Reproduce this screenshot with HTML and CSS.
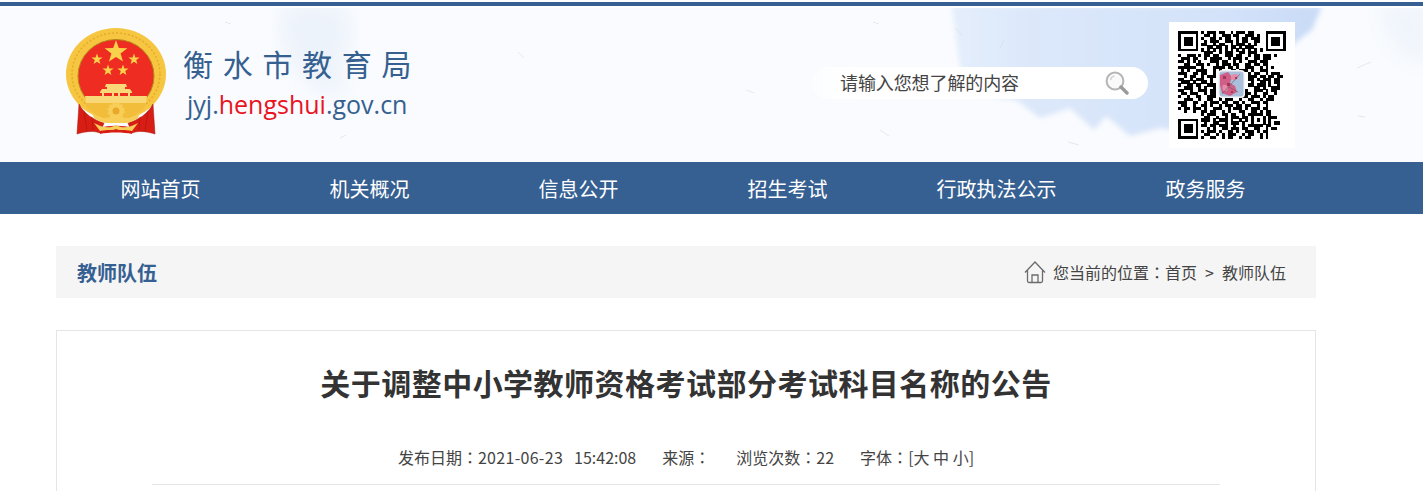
FILE: index.html
```html
<!DOCTYPE html>
<html lang="zh-CN">
<head>
  <meta charset="UTF-8" />
  <title>衡水市教育局</title>
  <link rel="stylesheet" href="styles.css">
</head>
<body>
  <div class="topLine"></div>

  <!-- Header -->
  <div class="header">
    <svg class="headerBg" viewBox="0 0 1423 154" preserveAspectRatio="none" aria-hidden="true">
      <defs>
        <filter id="soft"><feGaussianBlur stdDeviation="2.5" /></filter>
        <filter id="softer"><feGaussianBlur stdDeviation="10" /></filter>
        <linearGradient id="wash" x1="0" y1="0" x2="1" y2="0">
          <stop offset="0" stop-color="#e4eefb" />
          <stop offset=".25" stop-color="#dbe7fa" />
          <stop offset=".75" stop-color="#d3e2f9" />
          <stop offset="1" stop-color="#c9dbf7" />
        </linearGradient>
      </defs>
      <path filter="url(#softer)" fill="#edf3fb" d="M283 -5 L345 -5 L352 30 L340 55 L345 88 L318 82 L292 58 L280 25 Z" />
      <path filter="url(#softer)" fill="#f0f5fc" d="M1375 -5 L1430 -5 L1430 60 L1395 40 Z" />
      <path filter="url(#soft)" fill="url(#wash)" d="M952 -2 L1322 -2 L1312 22 L1296 34 L1272 62 L1262 96 L1254 118 L1215 128 L1160 120 L1130 128 L1106 108 L1094 122 L1070 100 L1040 110 L1016 92 L985 88 L960 58 Z" />
      <g class="fibers">
        <path d="M873 14l6 2M955 20l7 7M1357 60l14-6M1267 96l9-5M880 122l9 6M1068 134l11 3M1358 108l7 1M1000 40l4-8M225 14l6 2M518 44l6 6M746 82l8 3M1250 44l-4 5M340 130l6-3" />
      </g>
    </svg>
    <div class="wrap headerRow">
      <div class="logo">
        <svg class="emblem" viewBox="0 0 104 110" aria-hidden="true">
          <ellipse cx="52" cy="47" rx="50" ry="46" fill="#f6c640" />
          <ellipse cx="52" cy="47" rx="44" ry="41" fill="none" stroke="#e6a928" stroke-width="1.4" stroke-dasharray="2 2" />
          <ellipse cx="52" cy="49" rx="38" ry="36.5" fill="#ee2c21" stroke="#b5861c" stroke-width="1" />
          <polygon class="star" points="52,13 54.8,21 63.4,21.3 56.6,26.4 59,34.6 52,29.9 45,34.6 47.4,26.4 40.6,21.3 49.2,21" />
          <polygon class="star" points="33,26.5 34.4,30.4 38.6,30.5 35.2,33 36.4,37 33,34.7 29.6,37 30.8,33 27.4,30.5 31.6,30.4" />
          <polygon class="star" points="70,26.5 71.4,30.4 75.6,30.5 72.2,33 73.4,37 70,34.7 66.6,37 67.8,33 64.4,30.5 68.6,30.4" />
          <polygon class="star" points="44,37.5 45.4,41.4 49.6,41.5 46.2,44 47.4,48 44,45.7 40.6,48 41.8,44 38.4,41.5 42.6,41.4" />
          <polygon class="star" points="59,37.5 60.4,41.4 64.6,41.5 61.2,44 62.4,48 59,45.7 55.6,48 56.8,44 53.4,41.5 57.6,41.4" />
          <!-- gate -->
          <path class="gate" d="M42 57h20l1 3h-2v2h5l2 3v1H36v-1l2-3h5v-2h-2z" />
          <path class="gate" d="M38 66h2v3h-2zM48 66h2v3h-2zM54 66h2v3h-2zM64 66h2v3h-2z" />
          <path class="gate" d="M21 69h62l-1 7H22z" />
          <path fill="#f3bd3c" d="M22 76h60l-3 6c-8 8-18 11-27 11s-19-3-27-11z" />
          <!-- ribbons -->
          <path fill="#d81e14" stroke="#a9140c" stroke-width=".5" d="M15 77 C20 87 30 93 40 96 L36 106 C28 103 20 105 13 107 Z" />
          <path fill="#d81e14" stroke="#a9140c" stroke-width=".5" d="M89 77 C84 87 74 93 64 96 L68 106 C76 103 84 105 91 107 Z" />
          <path fill="#ee3a2a" d="M20 84l3 20M28 90l1 13" stroke="#a9140c" stroke-width=".6" />
          <path fill="#ee3a2a" d="M84 84l-3 20M76 90l-1 13" stroke="#a9140c" stroke-width=".6" />
          <path fill="#d81e14" d="M36 101 C44 98 60 98 68 101 L68 107 C60 105 44 105 36 107 Z" />
          <!-- gear and wheat -->
          <path class="gold" d="M30 96 C36 99 44 103 52 98 C60 103 68 99 74 96 L68 104 C60 102 56 104 52 102 C48 104 44 102 36 104 Z" />
          <path class="gold" d="M28 86 C36 92 42 92 46 90 L58 90 C62 92 68 92 76 86 L74 91 C66 97 60 96 52 96 C44 96 38 97 30 91 Z" />
          <circle class="gold" cx="52" cy="84" r="7.5" stroke="#f7cf58" stroke-width="2.5" stroke-dasharray="2 2" />
          <circle cx="52" cy="84" r="3.5" fill="#e8a828" />
        </svg>
        <div class="siteName">
          <div class="nameCn">衡水市教育局</div>
          <div class="nameUrl">jyj.<span class="urlRed">hengshui</span>.gov.cn</div>
        </div>
      </div>

      <div class="search">
        <span class="searchText">请输入您想了解的内容</span>
        <svg class="searchIcon" viewBox="0 0 24 24" aria-hidden="true">
          <circle cx="10" cy="10" r="8.4" fill="#fafafa" stroke="#b5b5b5" stroke-width="2" />
          <path d="M5.5 9a5 5 0 0 1 4-4" fill="none" stroke="#d5d5d5" stroke-width="1.5" />
          <path d="M16 16l6 6" stroke="#9a9a9a" stroke-width="3.4" stroke-linecap="round" />
        </svg>
      </div>

      <div class="qrBox">
        <svg class="qr" viewBox="0 0 37 37" shape-rendering="crispEdges" aria-hidden="true">
          <path fill="none" stroke="#000" stroke-width="1.1" d="M8 .5h1m1 0h3m1 0h2m2 0h1m1 0h3m1 0h2
            M9 1.5h2m1 0h1m2 0h3m1 0h2m2 0h3m1 0h1
            M8 2.5h1m2 0h2m1 0h1m1 0h2m2 0h1m1 0h2m1 0h3
            M9 3.5h1m1 0h3m2 0h3m1 0h1m1 0h2m2 0h2
            M8 4.5h2m2 0h1m1 0h2m2 0h1m1 0h3m1 0h1m1 0h1
            M10 5.5h2m1 0h2m1 0h1m1 0h2m1 0h1m1 0h3
            M8 6.5h1m1 0h1m1 0h1m1 0h1m1 0h1m1 0h1m1 0h1m1 0h1m1 0h1m1 0h1m1 0h1
            M9 7.5h3m2 0h1m1 0h3m2 0h2m1 0h3
            M0 8.5h1m2 0h3m1 0h1m1 0h2m1 0h2m2 0h3m1 0h2m2 0h1m1 0h2m1 0h3m1 0h1
            M1 9.5h3m1 0h2m2 0h1m1 0h4m2 0h1m1 0h3m1 0h1m2 0h2m1 0h3
            M0 10.5h2m1 0h1m1 0h1m1 0h1m3 0h3m1 0h2m2 0h1m1 0h1m2 0h3m1 0h3
            M2 11.5h2m2 0h3m1 0h1m2 0h1m1 0h3m1 0h2m2 0h2m1 0h2m1 0h2
            M0 12.5h6m2 0h1m3 0h4m1 0h2m1 0h1m2 0h3m2 0h1m1 0h1m1 0h1
            M1 13.5h1m1 0h1m2 0h4m2 0h1m1 0h1m3 0h2m1 0h3m1 0h1m2 0h3
            M0 14.5h3m2 0h2m1 0h2m2 0h1m11 0h1m1 0h2m2 0h1m1 0h3
            M2 15.5h1m1 0h2m2 0h1m1 0h3m11 0h3m1 0h2m1 0h2m1 0h2
            M0 16.5h2m2 0h1m1 0h3m2 0h1m12 0h2m1 0h1m1 0h3m1 0h2
            M1 17.5h3m1 0h1m2 0h2m1 0h1m13 0h1m2 0h2m1 0h1m1 0h2
            M0 18.5h1m2 0h2m1 0h2m2 0h3m11 0h2m1 0h3m1 0h1m2 0h1
            M2 19.5h3m2 0h1m1 0h1m2 0h1m13 0h2m1 0h1m2 0h3
            M0 20.5h2m2 0h1m2 0h3m1 0h2m10 0h1m2 0h3m1 0h1m1 0h2
            M1 21.5h2m1 0h3m2 0h1m1 0h2m10 0h2m1 0h1m2 0h2m2 0h1
            M0 22.5h1m2 0h1m2 0h2m2 0h3m1 0h2m5 0h3m1 0h3m1 0h1m1 0h2
            M2 23.5h3m2 0h1m2 0h2m2 0h1m1 0h3m2 0h1m2 0h2m2 0h1m1 0h3
            M0 24.5h3m2 0h2m2 0h1m1 0h3m1 0h2m2 0h2m1 0h1m2 0h3m1 0h2
            M1 25.5h2m2 0h1m2 0h2m1 0h1m2 0h1m1 0h3m1 0h2m1 0h2m2 0h1m2 0h1
            M0 26.5h1m1 0h2m1 0h3m1 0h1m2 0h3m2 0h1m1 0h3m1 0h1m1 0h3m1 0h2
            M2 27.5h1m2 0h1m2 0h2m1 0h2m2 0h1m1 0h1m3 0h2m2 0h2m1 0h1m1 0h2
            M8 28.5h1m1 0h3m2 0h2m1 0h2m2 0h1m1 0h5m1 0h2
            M9 29.5h2m2 0h1m2 0h1m1 0h3m1 0h2m1 0h1m3 0h1m1 0h3
            M8 30.5h3m1 0h1m1 0h3m1 0h1m2 0h1m1 0h1m1 0h1m1 0h1m1 0h1m1 0h1
            M9 31.5h1m2 0h2m2 0h1m1 0h3m1 0h1m2 0h1m3 0h1m1 0h1m1 0h2
            M8 32.5h2m1 0h2m1 0h3m2 0h1m2 0h1m1 0h5m1 0h2
            M10 33.5h1m1 0h1m2 0h2m1 0h3m1 0h2m2 0h2m2 0h1m1 0h2
            M8 34.5h1m1 0h3m1 0h1m2 0h2m1 0h1m2 0h3m1 0h1m1 0h2
            M9 35.5h2m2 0h1m1 0h1m1 0h3m2 0h1m1 0h2m2 0h1m1 0h1
            M8 36.5h1m2 0h2m2 0h1m1 0h2m2 0h1m1 0h2m3 0h1m1 0h1" />
          <path d="M0 0h7v7H0zM1 1v5h5V1zM2 2h3v3H2zM30 0h7v7h-7zM31 1v5h5V1zM32 2h3v3h-3zM0 30h7v7H0zM1 31v5h5v-5zM2 32h3v3H2z" fill-rule="evenodd" />
        </svg>
        <svg class="qrPhoto" viewBox="0 0 27 28" aria-hidden="true">
          <rect width="27" height="28" rx="4" fill="#f4f4f4" />
          <rect x="1.5" y="1.5" width="24" height="25" rx="3" fill="#a9bfdc" />
          <path fill="#cf5f85" d="M2 5l8-3 4 5-2 6 5 3 2 6-7 4-8-3-2-8z" />
          <path fill="#e58aa8" d="M13 6c2-2 6-3 7 0s-2 4-4 4-4-2-3-4zM5 15c2-1 5 0 5 3s-2 4-4 3-2-5-1-6z" />
          <path fill="#a8345c" d="M5 6h3v3H5zM9 13h3v3H9zM13 21h2v2h-2zM17 7h2v2h-2z" />
          <path stroke="#6b5560" stroke-width=".6" fill="none" d="M4 24L14 13l8-9M11 17l9 5" />
        </svg>
      </div>
    </div>
  </div>

  <!-- Nav -->
  <div class="nav">
    <div class="wrap navRow">
      <a class="navItem">网站首页</a>
      <a class="navItem">机关概况</a>
      <a class="navItem">信息公开</a>
      <a class="navItem">招生考试</a>
      <a class="navItem">行政执法公示</a>
      <a class="navItem">政务服务</a>
    </div>
  </div>

  <!-- Breadcrumb -->
  <div class="wrap crumbBar">
    <div class="crumbTitle">教师队伍</div>
    <div class="crumbPath">
      <svg class="homeIcon" viewBox="0 0 22 24" aria-hidden="true">
        <path d="M1 12.5L11 2l10 10.5M3.5 10.5V21a1.5 1.5 0 0 0 1.5 1.5h12a1.5 1.5 0 0 0 1.5-1.5V10.5M8 22.5V15h6v7.5" fill="none" stroke="#6b6b6b" stroke-width="1.3" />
      </svg>
      <span>您当前的位置<span class="colon" lang="zh-TW">：</span>首页</span>
      <span class="crumbArrow">&gt;</span>
      <span>教师队伍</span>
    </div>
  </div>

  <!-- Article -->
  <div class="wrap article">
    <h1 class="articleTitle">关于调整中小学教师资格考试部分考试科目名称的公告</h1>
    <div class="articleMeta">
      <span>发布日期<span class="colon" lang="zh-TW">：</span><span class="metaDate">2021-06-23</span>15:42:08</span>
      <span>来源<span class="colon" lang="zh-TW">：</span></span>
      <span>浏览次数<span class="colon" lang="zh-TW">：</span>22</span>
      <span>字体<span class="colon" lang="zh-TW">：</span>[大 中 小]</span>
    </div>
  </div>
</body>
</html>
```

FILE: styles.css
```css
html, body {
  margin: 0;
  height: 491px;
  overflow: hidden;
}
body {
  padding-top: 2px;
  box-sizing: border-box;
  background: #fff;
  color: #333;
  font-family: "Noto Sans CJK SC", "Liberation Sans", sans-serif;
}
.wrap {
  width: 1260px;
  margin-left: 56px;
  box-sizing: border-box;
}
.colon {
  font-family: "Noto Sans CJK TC", sans-serif;
}
.topLine {
  height: 4px;
  margin-bottom: 2px;
  background: #366092;
}

/* Header */
.header {
  position: relative;
  height: 154px;
  background: #f9fbfe;
  overflow: hidden;
}
.headerBg {
  position: absolute;
  left: 0;
  top: 0;
  width: 100%;
  height: 100%;
}
.fibers path {
  fill: none;
  stroke: #d3dde4;
  stroke-width: 1;
  opacity: .6;
}
.headerRow {
  position: relative;
  display: flex;
  align-items: center;
  height: 100%;
  padding: 0 21px 0 8px;
}
.logo {
  display: flex;
  align-items: flex-start;
}
.emblem {
  width: 104px;
  height: 110px;
  margin-top: -7px;
}
.star {
  fill: #f8d24b;
}
.gate {
  fill: #f9d877;
}
.gold {
  fill: #f7cf58;
}
.siteName {
  margin-left: 15px;
  color: #35608f;
}
.nameCn {
  font-size: 30px;
  line-height: 40px;
  letter-spacing: 9.7px;
  margin-top: 9px;
  white-space: nowrap;
}
.nameUrl {
  font-family: "Open Sans", sans-serif;
  font-size: 25px;
  line-height: 34px;
  margin-top: 4px;
  margin-left: 4px;
}
.urlRed {
  color: #e8141e;
}
.search {
  display: flex;
  align-items: center;
  justify-content: space-between;
  width: 336px;
  height: 32px;
  margin-left: auto;
  margin-bottom: 4px;
  padding: 0 19px 0 28px;
  box-sizing: border-box;
  border-radius: 16px;
  background: linear-gradient(to right, rgba(255,255,255,.5), #fff 12%);
}
.searchText {
  margin-bottom: 2px;
  font-size: 18px;
  letter-spacing: -.1px;
  color: #444;
}
.searchIcon {
  width: 24px;
  height: 24px;
}
.qrBox {
  position: relative;
  display: flex;
  align-items: center;
  justify-content: center;
  width: 126px;
  height: 126px;
  margin-left: 21px;
  background: #fff;
}
.qr {
  width: 108px;
  height: 108px;
}
.qrPhoto {
  position: absolute;
  left: 49px;
  top: 48px;
  width: 27px;
  height: 28px;
}

/* Nav */
.nav {
  height: 52px;
  background: #366092;
}
.navRow {
  display: flex;
}
.navItem {
  width: 209px;
  text-align: center;
  font-size: 20px;
  line-height: 54px;
  color: #fff;
}

/* Breadcrumb */
.crumbBar {
  display: flex;
  align-items: center;
  justify-content: space-between;
  height: 52px;
  margin-top: 32px;
  padding: 0 30px 0 21px;
  background: #f5f5f5;
}
.crumbTitle {
  font-size: 20px;
  font-weight: bold;
  color: #366092;
}
.crumbPath {
  display: flex;
  align-items: center;
  font-size: 16px;
  color: #444;
}
.homeIcon {
  width: 22px;
  height: 24px;
  margin-right: 7px;
}
.crumbArrow {
  margin: 0 8px 0 8px;
}

/* Article */
.article {
  height: 162px;
  margin-top: 32px;
  padding: 0 95px;
  border: 1px solid #e5e5e5;
}
.articleTitle {
  margin: 28px 0 0;
  text-align: center;
  font-size: 30px;
  line-height: 46px;
  letter-spacing: .48px;
  font-weight: bold;
  color: #333;
}
.articleMeta {
  display: flex;
  justify-content: center;
  gap: 26px;
  height: 49px;
  margin-top: 30px;
  border-bottom: 1px solid #e5e5e5;
  font-size: 16px;
  line-height: 44px;
  color: #444;
}
.metaDate {
  margin-right: 11px;
  letter-spacing: .3px;
}
```
